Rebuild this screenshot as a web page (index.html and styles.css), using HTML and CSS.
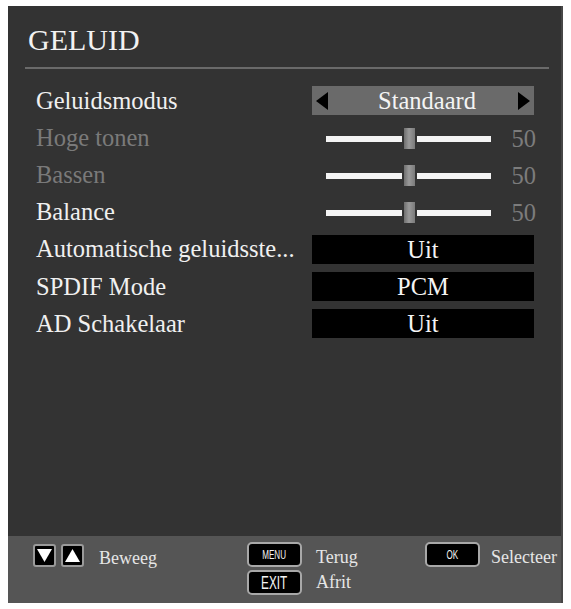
FILE: index.html
```html
<!DOCTYPE html>
<html lang="nl">
<head>
<meta charset="utf-8">
<title>Geluid</title>
<link rel="stylesheet" href="styles.css">
</head>
<body>
<div class="panel">
  <h1 class="title">GELUID</h1>
  <div class="rule"></div>
  <div class="rows">
    <div class="label">Geluidsmodus</div>
    <div class="selector">
      <span class="arrow arrow-left"></span>
      <span class="sel-text">Standaard</span>
      <span class="arrow arrow-right"></span>
    </div>

    <div class="label dim">Hoge tonen</div>
    <div class="slider">
      <div class="track"><div class="knob"></div></div>
      <span class="val">50</span>
    </div>

    <div class="label dim">Bassen</div>
    <div class="slider">
      <div class="track"><div class="knob"></div></div>
      <span class="val">50</span>
    </div>

    <div class="label">Balance</div>
    <div class="slider">
      <div class="track"><div class="knob"></div></div>
      <span class="val">50</span>
    </div>

    <div class="label">Automatische geluidsste...</div>
    <div class="option">Uit</div>

    <div class="label">SPDIF Mode</div>
    <div class="option">PCM</div>

    <div class="label">AD Schakelaar</div>
    <div class="option">Uit</div>
  </div>

  <div class="footer">
    <div class="group group-move">
      <span class="key-icon">
        <svg width="15" height="13" viewBox="0 0 15 13"><polygon points="0,0 15,0 7.5,13" fill="#fff"/></svg>
      </span>
      <span class="key-icon">
        <svg width="15" height="13" viewBox="0 0 15 13"><polygon points="0,13 15,13 7.5,0" fill="#fff"/></svg>
      </span>
      <span class="hint hint-move">Beweeg</span>
    </div>
    <div class="group group-menu">
      <div class="key-row">
        <span class="key"><span class="key-text key-menu">MENU</span></span>
        <span class="hint hint-low">Terug</span>
      </div>
      <div class="key-row">
        <span class="key"><span class="key-text key-exit">EXIT</span></span>
        <span class="hint">Afrit</span>
      </div>
    </div>
    <div class="group group-ok">
      <div class="key-row">
        <span class="key"><span class="key-text key-ok">OK</span></span>
        <span class="hint hint-low">Selecteer</span>
      </div>
    </div>
  </div>
</div>
</body>
</html>
```
FILE: styles.css
```css
html, body {
  margin: 0;
  padding: 0;
  background: #ffffff;
}

body {
  font-family: "Liberation Serif", "Times New Roman", serif;
}

.panel {
  margin: 6px 0 0 8px;
  width: 555px;
  height: 597px;
  background: #333333;
  display: flex;
  flex-direction: column;
  box-sizing: border-box;
  border-right: 2px solid #474747;
}

.title {
  margin: 0;
  padding: 19px 0 0 20px;
  font-size: 30px;
  line-height: 30px;
  font-weight: normal;
  color: #f2f2f2;
}

.rule {
  margin: 12px 12px 0 17px;
  height: 2px;
  background: #6a6a6a;
}

.rows {
  margin-top: 13px;
  padding-left: 28px;
  display: grid;
  grid-template-columns: 276px 222px;
  grid-auto-rows: 37.2px;
  align-items: center;
  flex: 1;
  align-content: start;
}

.label {
  font-size: 24.5px;
  color: #f0f0f0;
  white-space: nowrap;
}

.label.dim {
  color: #7a7a7a;
}

.selector {
  height: 29px;
  background: #6a6a6a;
  display: flex;
  align-items: center;
  padding: 0 4px;
  box-sizing: border-box;
}

.sel-text {
  flex: 1;
  text-align: center;
  font-size: 24.5px;
  color: #f4f4f4;
  padding-left: 8px;
}

.arrow {
  width: 0;
  height: 0;
  border-top: 9px solid transparent;
  border-bottom: 9px solid transparent;
}

.arrow-left {
  border-right: 12px solid #000;
}

.arrow-right {
  border-left: 12px solid #000;
}

.slider {
  display: flex;
  align-items: center;
  padding-left: 14px;
  position: relative;
  top: 1px;
}

.track {
  position: relative;
  width: 165px;
  height: 6px;
  background: #f4f4f4;
}

.knob {
  position: absolute;
  left: 76px;
  top: -8px;
  width: 11px;
  height: 21px;
  background: linear-gradient(to right, #6f6f6f, #9a9a9a 45%, #7a7a7a);
  border-left: 2px solid #333;
  border-right: 2px solid #333;
}

.val {
  margin-left: auto;
  margin-right: -2px;
  font-size: 24.5px;
  color: #7c7c7c;
}

.option {
  height: 29px;
  background: #000;
  color: #f4f4f4;
  font-size: 24.5px;
  line-height: 29px;
  text-align: center;
}

.footer {
  height: 67px;
  background: #555555;
  display: flex;
  align-items: flex-start;
  padding: 6px 0 0 25px;
  box-sizing: border-box;
}

.group {
  display: flex;
}

.group-move {
  width: 214px;
  align-items: center;
  height: 27px;
}

.group-menu {
  width: 178px;
  flex-direction: column;
  gap: 3px;
}

.key-icon {
  width: 23px;
  height: 23px;
  box-sizing: border-box;
  background: #000;
  border: 2px solid #9a9a9a;
  border-radius: 3px;
  display: flex;
  align-items: center;
  justify-content: center;
  margin-right: 5px;
}

.hint {
  font-size: 18px;
  color: #e6e6e6;
  margin-left: 14px;
}

.hint-low {
  position: relative;
  top: 3px;
}

.hint-move {
  margin-left: 10px;
  position: relative;
  top: 3px;
}

.key-row {
  display: flex;
  align-items: center;
  height: 25px;
}

.key {
  width: 55px;
  height: 25px;
  box-sizing: border-box;
  background: #000;
  border: 2px solid #a8a8a8;
  border-radius: 5px;
  display: flex;
  align-items: center;
  justify-content: center;
  overflow: hidden;
}

.key-text {
  display: inline-block;
  font-family: "Liberation Sans", Arial, sans-serif;
  color: #f4f4f4;
  transform: scaleX(0.62);
}

.key-menu {
  font-size: 13px;
}

.key-exit {
  font-size: 19px;
}

.key-ok {
  font-size: 13px;
}

.group-ok .hint {
  margin-left: 11px;
}
```
